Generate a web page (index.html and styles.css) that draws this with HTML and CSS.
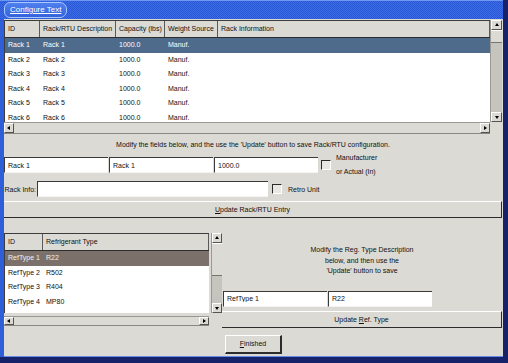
FILE: index.html
```html
<!DOCTYPE html>
<html lang="en">
<head>
<meta charset="utf-8">
<title>Configure Text</title>
<link rel="stylesheet" href="styles.css">
</head>
<body>
<div class="window">
  <div class="titlebar"><span class="tab">Configure Text</span></div>
  <div class="content">

    <div class="grid grid-racks">
      <div class="table racks">
        <div class="row head"><span>ID</span><span>Rack/RTU Description</span><span>Capacity (lbs)</span><span>Weight Source</span><span>Rack Information</span></div>
        <div class="row sel"><span>Rack 1</span><span>Rack 1</span><span>1000.0</span><span>Manuf.</span><span></span></div>
        <div class="row"><span>Rack 2</span><span>Rack 2</span><span>1000.0</span><span>Manuf.</span><span></span></div>
        <div class="row"><span>Rack 3</span><span>Rack 3</span><span>1000.0</span><span>Manuf.</span><span></span></div>
        <div class="row"><span>Rack 4</span><span>Rack 4</span><span>1000.0</span><span>Manuf.</span><span></span></div>
        <div class="row"><span>Rack 5</span><span>Rack 5</span><span>1000.0</span><span>Manuf.</span><span></span></div>
        <div class="row"><span>Rack 6</span><span>Rack 6</span><span>1000.0</span><span>Manuf.</span><span></span></div>
      </div>
      <div class="vscroll">
        <span class="arrow up"></span>
        <span class="thumb t1"></span>
        <span class="track"></span>
        <span class="arrow down"></span>
      </div>
      <div class="hscroll">
        <span class="arrow left"></span>
        <span class="track"></span>
        <span class="arrow right"></span>
      </div>
    </div>

    <p class="msg">Modify the fields below, and the use the 'Update' button to save Rack/RTU configuration.</p>

    <div class="fields">
      <input class="field" type="text" value="Rack 1">
      <input class="field" type="text" value="Rack 1">
      <input class="field" type="text" value="1000.0">
      <span class="check"></span>
      <span class="manuf">Manufacturer<br>or Actual (In)</span>
    </div>

    <div class="fields info">
      <label class="info-label">Rack Info:</label>
      <input class="field wide" type="text" value="">
      <span class="check"></span>
      <span class="retro">Retro Unit</span>
    </div>

    <div class="button full"><u>U</u>pdate Rack/RTU Entry</div>

    <div class="lower">
      <div class="grid grid-ref">
        <div class="table reftypes">
          <div class="row head"><span>ID</span><span>Refrigerant Type</span></div>
          <div class="row sel brown"><span>RefType 1</span><span>R22</span></div>
          <div class="row"><span>RefType 2</span><span>R502</span></div>
          <div class="row"><span>RefType 3</span><span>R404</span></div>
          <div class="row"><span>RefType 4</span><span>MP80</span></div>
        </div>
        <div class="vscroll">
          <span class="arrow up"></span>
          <span class="thumb t2"></span>
          <span class="track"></span>
          <span class="arrow down"></span>
        </div>
        <div class="hscroll">
          <span class="arrow left"></span>
          <span class="track"></span>
          <span class="arrow right"></span>
        </div>
      </div>

      <div class="ref-panel">
        <p class="ref-msg">Modify the Reg. Type Description<br>below, and then use the<br>'Update' button to save</p>
        <div class="fields ref-fields">
          <input class="field" type="text" value="RefType 1">
          <input class="field" type="text" value="R22">
        </div>
        <div class="button"><span>Update <u>R</u>ef. Type</span></div>
      </div>
    </div>

    <div class="button finished"><u>F</u>inished</div>

  </div>
</div>
</body>
</html>
```

FILE: styles.css
```css
body {
  margin: 0;
  font-family: "Liberation Sans", Arial, sans-serif;
}
.window {
  width: 508px;
  height: 363px;
  box-sizing: border-box;
  background: #2f5fd8;
  border-right: 5px solid #16236b;
  border-bottom: 6px solid #16236b;
  padding-left: 4px;
  display: flex;
  flex-direction: column;
  font-size: 7px;
  color: #111;
}
.titlebar {
  height: 19px;
  margin-left: -4px;
  padding-left: 4px;
  box-sizing: border-box;
  background: repeating-conic-gradient(#2957d6 0 25%, #3d6de6 0 50%) 0 0/2px 2px;
  border-top: 1px solid #6f96f0;
}
.tab {
  display: inline-block;
  margin-top: 1px;
  height: 14px;
  line-height: 14px;
  padding: 0 5px 0 5px;
  border: 1px solid #a9c6ff;
  border-radius: 6px 7px 7px 6px;
  background: linear-gradient(#4f80ee, #3463dc);
  color: #fff;
  font-size: 8px;
  text-decoration: underline;
}
.content {
  flex: 1;
  background: #dcdad4;
  border-bottom: 1px solid #6a8ae8;
  padding-right: 1px;
  display: flex;
  flex-direction: column;
}

/* tables */
.grid {
  display: grid;
}
.grid-racks {
  margin-top: 1px;
  grid-template-columns: 486px 12px;
  grid-template-rows: 102px 12px;
}
.table {
  background: #fff;
  border-top: 1px solid #3c3c3c;
  border-left: 1px solid #3c3c3c;
  overflow: hidden;
}
.row {
  display: grid;
  height: 14.6px;
  line-height: 14.6px;
  white-space: nowrap;
}
.row span {
  padding-left: 3px;
  overflow: hidden;
}
.racks .row {
  grid-template-columns: 35px 76px 49px 53px 1fr;
}
.reftypes .row {
  grid-template-columns: 38px 1fr;
}
.row.head {
  height: 16px;
  line-height: 16px;
  background: #dcdad4;
  border-bottom: 1px solid #2e2e2e;
}
.row.head span {
  border-right: 1px solid #5a5a5a;
}
.row.sel {
  background: #4e6b8c;
  color: #fff;
}
.row.sel.brown {
  background: #7b716a;
  color: #f4f0ea;
}

/* scrollbars */
.vscroll {
  display: flex;
  flex-direction: column;
  background: #c6c4be;
  border-left: 1px solid #9a9892;
}
.hscroll {
  display: flex;
  background: #dcdad4;
  border-top: 1px solid #9a9892;
  border-bottom: 1px solid #8a8882;
}
.track {
  flex: 1;
}
.thumb {
  background: #dcdad4;
  border-top: 1px solid #fff;
  border-bottom: 1px solid #77756f;
}
.t1 {
  height: 11px;
}
.t2 {
  height: 31px;
}
.arrow {
  position: relative;
  box-sizing: border-box;
  background: #dcdad4;
  border-top: 1px solid #fff;
  border-left: 1px solid #fff;
  border-right: 1px solid #55534e;
  border-bottom: 1px solid #55534e;
}
.vscroll .arrow {
  height: 10px;
}
.hscroll .arrow {
  width: 10px;
}
.arrow::after {
  content: "";
  position: absolute;
  left: 50%;
  top: 50%;
  border: 2px solid transparent;
}
.arrow.up::after {
  border-bottom: 3px solid #000;
  margin: -4px 0 0 -2px;
}
.arrow.down::after {
  border-top: 3px solid #000;
  margin: -1px 0 0 -2px;
}
.arrow.left::after {
  border-right: 3px solid #000;
  margin: -2px 0 0 -4px;
}
.arrow.right::after {
  border-left: 3px solid #000;
  margin: -2px 0 0 -1px;
}

/* form */
.msg {
  margin: 5px 0 0;
  line-height: 12px;
  text-align: center;
}
.fields {
  display: flex;
  align-items: center;
  gap: 1px;
  height: 16px;
  margin-top: 6px;
}
.field {
  box-sizing: border-box;
  width: 104px;
  height: 16px;
  margin: 0;
  padding: 0 3px;
  font-family: "Liberation Sans", Arial, sans-serif;
  font-size: 7px;
  color: #111;
  background: #fff;
  border: 0;
  border-top: 1px solid #3a3a3a;
  border-left: 1px solid #3a3a3a;
  border-bottom: 1px solid #f4f4f4;
  outline: none;
}
.check {
  box-sizing: border-box;
  width: 10px;
  height: 10px;
  margin-left: 2px;
  background: #e9e7e2;
  border-top: 1px solid #2a2a2a;
  border-left: 1px solid #2a2a2a;
  border-right: 1px solid #fff;
  border-bottom: 1px solid #fff;
}
.manuf {
  margin-left: 4px;
  line-height: 14px;
}
.info {
  margin-top: 8px;
}
.info-label {
  width: 32px;
  text-align: right;
  white-space: nowrap;
}
.field.wide {
  width: 231px;
}
.info .check {
  margin-left: 3px;
}
.retro {
  margin-left: 5px;
}

/* buttons */
.button {
  box-sizing: border-box;
  height: 17px;
  line-height: 15px;
  margin-top: 4px;
  text-align: center;
  background: #dcdad4;
  border-top: 1px solid #fff;
  border-bottom: 1px solid #2c2c2c;
  border-right: 1px solid #2c2c2c;
}

/* lower part */
.lower {
  display: flex;
  margin-top: 15px;
}
.grid-ref {
  grid-template-columns: 205px 11px;
  grid-template-rows: 80px 10px;
  column-gap: 2px;
  row-gap: 3px;
  height: 93px;
}
.ref-panel {
  flex: 1;
  display: flex;
  flex-direction: column;
}
.ref-msg {
  margin: 12px 0 0;
  line-height: 10.5px;
  text-align: center;
}
.ref-fields {
  margin-top: 14px;
  padding-left: 1px;
}
.finished {
  width: 57px;
  height: 19px;
  line-height: 16px;
  margin: 7px 0 0 221px;
  border-left: 1px solid #fff;
  border-bottom: 2px solid #2c2c2c;
  border-right: 2px solid #2c2c2c;
}
```
